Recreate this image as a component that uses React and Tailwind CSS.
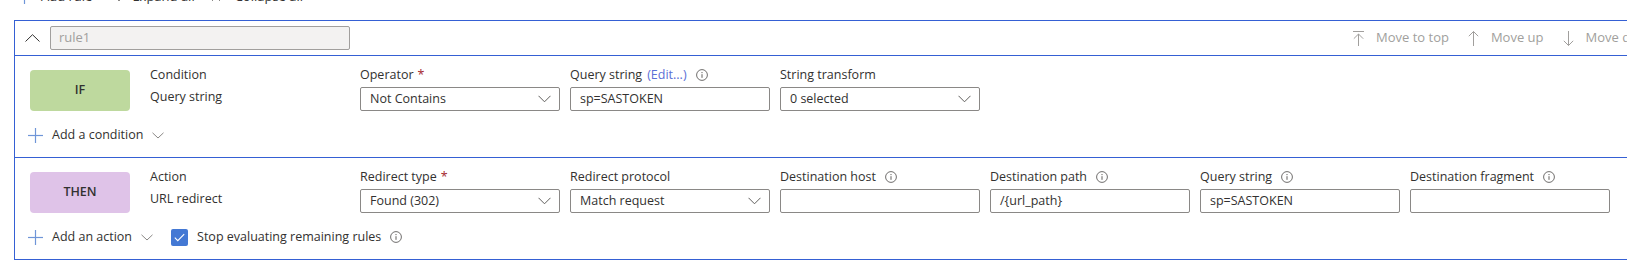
import React from "react";

const Chev = ({ className = "" }) => (
  <svg width="13" height="8" viewBox="0 0 13 8" className={className}>
    <path d="M0.5 0.8 L6.5 6.8 L12.5 0.8" fill="none" stroke="#605e5c" strokeWidth="1" />
  </svg>
);

const SmallChev = () => (
  <svg width="12" height="7" viewBox="0 0 12 7">
    <path d="M0.5 0.8 L6 6 L11.5 0.8" fill="none" stroke="#8a8886" strokeWidth="1" />
  </svg>
);

const Info = () => (
  <svg width="12" height="12" viewBox="0 0 12 12">
    <circle cx="6" cy="6" r="5.4" fill="none" stroke="#605e5c" strokeWidth="0.9" />
    <line x1="6" y1="5.2" x2="6" y2="8.8" stroke="#605e5c" strokeWidth="1" />
    <circle cx="6" cy="3.6" r="0.65" fill="#605e5c" />
  </svg>
);

const Plus = () => (
  <svg width="15" height="15" viewBox="0 0 15 15">
    <line x1="7.5" y1="0" x2="7.5" y2="15" stroke="#6f95d8" strokeWidth="1.2" />
    <line x1="0" y1="7.5" x2="15" y2="7.5" stroke="#6f95d8" strokeWidth="1.2" />
  </svg>
);

const Field = ({ f }) => (
  <div className="w-[200px] flex flex-col">
    <div className="h-[16px] leading-[16px] flex items-center text-[#323130] whitespace-nowrap">
      <span>{f.label}</span>
      {f.req && <span className="text-[#a4262c] ml-[4px]">*</span>}
      {f.edit && <span className="text-[#5b6fd6] ml-[5px]">(Edit...)</span>}
      {f.info && (
        <span className="ml-[9px] flex items-center">
          <Info />
        </span>
      )}
    </div>
    <div className="mt-[4px] h-[24px] border border-[#8a8886] rounded-[2px] bg-white flex items-center pl-[9px] pr-[8px] text-[#323130]">
      <span className="flex-1 whitespace-nowrap">{f.value}</span>
      {f.select && <Chev />}
    </div>
  </div>
);

const Section = ({ tag, tagClass, title, sub, fields, addText, checkbox, last }) => (
  <div className={`pl-[15px] pt-[14px] pb-[12px] ${last ? "" : "border-b border-[#3560d4]"}`}>
    <div className="flex items-start">
      <div className={`w-[100px] h-[41px] rounded-[4px] flex items-center justify-center text-[#323130] font-semibold ${tagClass}`}>
        {tag}
      </div>
      <div className="ml-[20px] w-[210px] -mt-[6px] leading-[22px] text-[#323130]">
        <div>{title}</div>
        <div>{sub}</div>
      </div>
      <div className="-mt-[3px] flex gap-[10px]">
        {fields.map((f, i) => (
          <Field key={i} f={f} />
        ))}
      </div>
    </div>
    <div className="mt-[14px] h-[20px] flex items-center text-[#323130]">
      <span className="-ml-[2px] flex items-center"><Plus /></span>
      <span className="ml-[9px]">{addText}</span>
      <span className="ml-[9px] flex items-center"><SmallChev /></span>
      {checkbox && (
        <>
          <div className="ml-[18px] w-[17px] h-[17px] rounded-[2px] bg-[#4378d4] flex items-center justify-center">
            <svg width="11" height="9" viewBox="0 0 11 9">
              <path d="M0.8 4.6 L3.8 7.6 L10.2 1.2" fill="none" stroke="white" strokeWidth="1.1" />
            </svg>
          </div>
          <span className="ml-[9px]">Stop evaluating remaining rules</span>
          <span className="ml-[9px] flex items-center"><Info /></span>
        </>
      )}
    </div>
  </div>
);

export default function App() {
  const ifFields = [
    { label: "Operator", req: true, select: true, value: "Not Contains" },
    { label: "Query string", edit: true, info: true, value: "sp=SASTOKEN" },
    { label: "String transform", select: true, value: "0 selected" },
  ];
  const thenFields = [
    { label: "Redirect type", req: true, select: true, value: "Found (302)" },
    { label: "Redirect protocol", select: true, value: "Match request" },
    { label: "Destination host", info: true, value: "" },
    { label: "Destination path", info: true, value: "/{url_path}" },
    { label: "Query string", info: true, value: "sp=SASTOKEN" },
    { label: "Destination fragment", info: true, value: "" },
  ];

  return (
    <div className="w-[1627px] h-[266px] overflow-hidden bg-white font-['Open_Sans',sans-serif] text-[12.5px]">
      {/* top toolbar (cut off) */}
      <div className="h-[20px] overflow-hidden">
        <div className="-mt-[12px] h-[16px] leading-[16px] flex items-center text-[#323130] text-[13px]">
          <span className="ml-[17px] flex items-center"><Plus /></span>
          <span className="ml-[9px]">Add rule</span>
          <span className="ml-[22px] flex items-center">
            <svg width="10" height="14" viewBox="0 0 10 14"><path d="M1 2 L5 6 L9 2 M1 8 L5 12 L9 8" fill="none" stroke="#8a8886" /></svg>
          </span>
          <span className="ml-[8px]">Expand all</span>
          <span className="ml-[16px] flex items-center">
            <svg width="10" height="14" viewBox="0 0 10 14"><path d="M1 6 L5 2 L9 6 M1 12 L5 8 L9 12" fill="none" stroke="#8a8886" /></svg>
          </span>
          <span className="ml-[14px]">Collapse all</span>
        </div>
      </div>

      {/* rule panel */}
      <div className="ml-[14px] w-[1680px] border border-[#3560d4]">
        <div className="h-[35px] flex items-center border-b border-[#3560d4]">
          <span className="ml-[10px] flex items-center">
            <svg width="15" height="8" viewBox="0 0 15 8">
              <path d="M0.5 7.5 L7.5 0.7 L14.5 7.5" fill="none" stroke="#323130" strokeWidth="1" />
            </svg>
          </span>
          <div className="ml-[10px] w-[300px] h-[24px] bg-[#f3f2f1] border border-[#a19f9d] rounded-[2px] pl-[8px] flex items-center text-[#a19f9d] text-[13px]">
            rule1
          </div>
          <div className="ml-[1003px] flex items-center gap-[19px] text-[#a19f9d] text-[13px] whitespace-nowrap">
            <div className="flex items-center gap-[12px]">
              <svg width="11" height="15" viewBox="0 0 11 15">
                <path d="M0 0.5 H11 M5.5 3 V15 M0.8 7.7 L5.5 3 L10.2 7.7" fill="none" stroke="#a19f9d" strokeWidth="1" />
              </svg>
              <span>Move to top</span>
            </div>
            <div className="flex items-center gap-[12px]">
              <svg width="11" height="15" viewBox="0 0 11 15">
                <path d="M5.5 0.5 V15 M0.8 5.2 L5.5 0.5 L10.2 5.2" fill="none" stroke="#a19f9d" strokeWidth="1" />
              </svg>
              <span>Move up</span>
            </div>
            <div className="flex items-center gap-[12px]">
              <svg width="11" height="15" viewBox="0 0 11 15">
                <path d="M5.5 0 V14.5 M0.8 9.8 L5.5 14.5 L10.2 9.8" fill="none" stroke="#a19f9d" strokeWidth="1" />
              </svg>
              <span>Move down</span>
            </div>
          </div>
        </div>
        <Section
          tag="IF"
          tagClass="bg-[#bed99e]"
          title="Condition"
          sub="Query string"
          fields={ifFields}
          addText="Add a condition"
        />
        <Section
          tag="THEN"
          tagClass="bg-[#dfc3e8]"
          title="Action"
          sub="URL redirect"
          fields={thenFields}
          addText="Add an action"
          checkbox
          last
        />
      </div>
    </div>
  );
}
